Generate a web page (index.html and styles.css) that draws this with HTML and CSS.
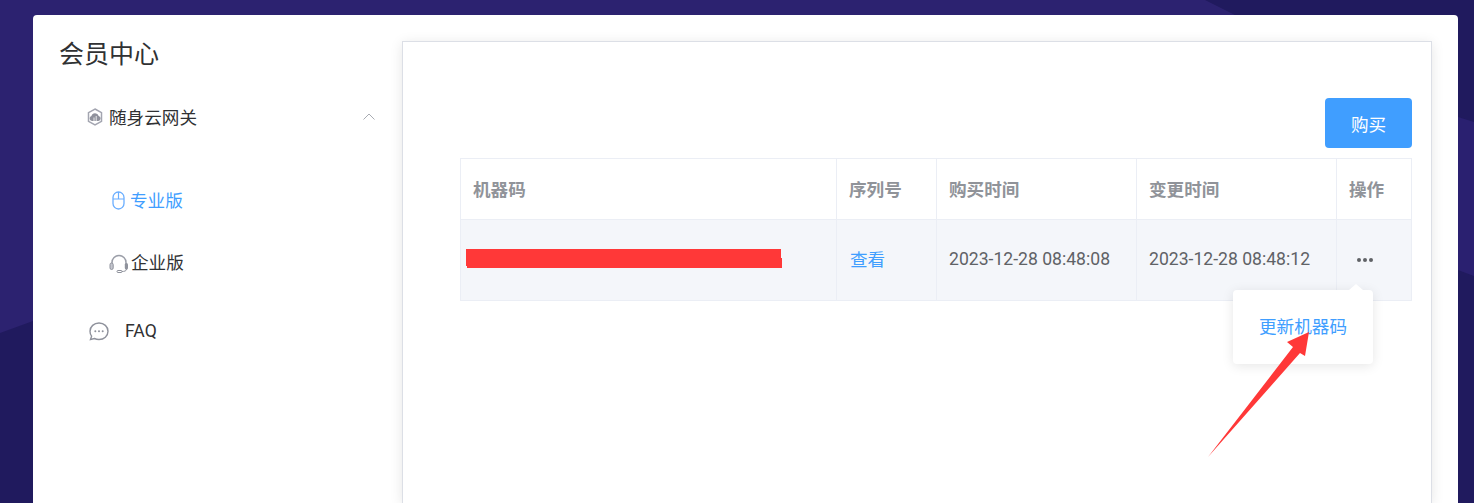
FILE: index.html
```html
<!DOCTYPE html>
<html lang="zh-CN">
<head>
  <meta charset="UTF-8" />
  <title>会员中心</title>
  <link rel="stylesheet" href="styles.css">
</head>
<body>

  <!-- Background shapes -->
  <div class="bg-light"></div>
  <div class="bg-band"></div>

  <div class="card">

    <!-- Left menu -->
    <div class="sidebar">
      <h2 class="sidebar-title">会员中心</h2>
      <div class="menu">
        <div class="menu-head">
          <svg class="icon icon-cloud" viewBox="0 0 16 18"><path d="M8 1l6.500 3.700v8.600L8 17l-6.500-3.700V4.700z" fill="none" stroke="#a3a5b0" stroke-width="1.500"/><path d="M5 13a2.500 2.500 0 0 1-.6-4.900 3.800 3.800 0 0 1 7.300-.2A2.600 2.600 0 0 1 11.300 13z" fill="#8f919c"/><path d="M7 13V9.500M9.200 13V8" stroke="#fff" stroke-width=".8"/></svg>
          <span>随身云网关</span>
          <svg class="chevron" viewBox="0 0 12 7"><path d="M.5 6.500L6 1l5.500 5.500" fill="none" stroke="#a8abb2" stroke-width="1"/></svg>
        </div>
        <div class="submenu">
          <div class="sub-item active">
            <svg class="icon icon-mouse" viewBox="0 0 13 19"><rect x="1" y="1" width="11" height="17" rx="5.500" fill="none" stroke="#6aaeff" stroke-width="1.300"/><path d="M1 8h11M6.500 1v7" stroke="#6aaeff" stroke-width="1.200"/></svg>
            <span>专业版</span>
          </div>
          <div class="sub-item">
            <svg class="icon icon-headset" viewBox="0 0 20 19"><path d="M3 10V8.500a7 7 0 0 1 14 0V10" fill="none" stroke="#9b9ea8" stroke-width="1.500"/><rect x="1" y="9" width="3.200" height="6.500" rx="1.600" fill="#c4c6ce" stroke="#8f929c" stroke-width="1"/><rect x="15.800" y="9" width="3.200" height="6.500" rx="1.600" fill="#8f929c"/><path d="M17.500 15c0 2-2 2.500-5 2.500" fill="none" stroke="#8f929c" stroke-width="1"/><rect x="8" y="16.500" width="5" height="2" rx="1" fill="#fff" stroke="#8f929c" stroke-width="1"/></svg>
            <span>企业版</span>
          </div>
        </div>
        <div class="menu-head faq">
          <svg class="icon icon-chat" viewBox="0 0 20 19"><path d="M10 1c5 0 9 3.600 9 8.300s-4 8.200-9 8.200c-1.700 0-3.300-.4-4.600-1l-3.900 1 1.100-3.300A8 8 0 0 1 1 9.300C1 4.600 5 1 10 1z" fill="none" stroke="#8f929c" stroke-width="1.400"/><circle cx="6.300" cy="9.300" r="1" fill="#8f929c"/><circle cx="10" cy="9.300" r="1" fill="#8f929c"/><circle cx="13.700" cy="9.300" r="1" fill="#8f929c"/></svg>
          <span>FAQ</span>
        </div>
      </div>
    </div>

    <!-- Main panel -->
    <div class="panel">
      <div class="toolbar">
        <button class="buy-button">购买</button>
      </div>
      <table class="order-table">
        <thead>
          <tr>
            <th class="col-code">机器码</th>
            <th class="col-serial">序列号</th>
            <th class="col-time">购买时间</th>
            <th class="col-time">变更时间</th>
            <th class="col-action">操作</th>
          </tr>
        </thead>
        <tbody>
          <tr>
            <td></td>
            <td><a class="link view-link">查看</a></td>
            <td>2023-12-28 08:48:08</td>
            <td>2023-12-28 08:48:12</td>
            <td class="more-cell">
              <span class="dots"><i></i><i></i><i></i></span>
              <div class="popover"><a class="link">更新机器码</a></div>
            </td>
          </tr>
        </tbody>
      </table>
    </div>
  </div>

  <!-- Red marks drawn over the screenshot -->
  <svg class="markup" viewBox="0 0 1474 503">
    <path d="M466 249h315v9h1v10H467v-2h-1z" fill="#ff3838"/>
    <path d="M1309 332l-22 10 6 5-85 110 92-104 5 3z" fill="#ff3838"/>
  </svg>

</body>
</html>
```

FILE: styles.css
```css
/* Page */
body {
  margin: 0;
  height: 503px;
  box-sizing: border-box;
  padding: 15px 16px 0 33px;
  overflow: hidden;
  position: relative;
  background-color: #201a5e;
  font-family: Roboto, "Noto Sans CJK SC", sans-serif;
  font-size: 17.6px;
  color: #303133;
}

/* Background shapes */
.bg-light {
  position: absolute;
  inset: 0;
  background: #2c2270;
  clip-path: polygon(0 0, 1205px 0, 1235px 15px, 33px 321px, 0 333px);
}

.bg-band {
  position: absolute;
  inset: 0;
  background: #2a2070;
  clip-path: polygon(1458px 117px, 1474px 122px, 1474px 276px, 1458px 270px);
}

/* Card */
.card {
  position: relative;
  display: flex;
  height: 100%;
  background: #fff;
  border-radius: 4px 4px 0 0;
  overflow: hidden;
}

/* Sidebar */
.sidebar {
  width: 369px;
  flex: none;
}

.sidebar-title {
  margin: 0;
  padding: 22px 0 0 26px;
  font-size: 25px;
  font-weight: 400;
  line-height: 36px;
}

.menu {
  margin-top: 15px;
}

.menu-head {
  display: flex;
  align-items: center;
  height: 56px;
  padding-left: 54px;
  position: relative;
}

.icon {
  flex: none;
}

.icon-cloud {
  width: 16px;
  height: 18px;
  margin: 2px 6px 0 0;
}

.chevron {
  position: absolute;
  left: 330px;
  top: 25px;
  width: 12px;
  height: 7px;
}

.submenu {
  padding: 24px 0 11px;
}

.sub-item {
  display: flex;
  align-items: center;
  height: 62px;
  padding-left: 76px;
}

.sub-item.active {
  color: #409eff;
}

.icon-mouse {
  width: 13px;
  height: 19px;
  margin: 2px 5px 0 3px;
}

.icon-headset {
  width: 20px;
  height: 19px;
  margin: 4px 2px 0 0;
}

.faq {
  padding-left: 56px;
}

.icon-chat {
  width: 20px;
  height: 19px;
  margin-right: 16px;
}

/* Main panel */
.panel {
  flex: 1;
  min-width: 0;
  margin: 26px 26px 0 0;
  padding: 56px 19px 0 57px;
  border: 1px solid #dcdfe6;
  border-bottom: none;
  box-shadow: 0 2px 12px rgba(0, 0, 0, 0.1);
}

.toolbar {
  display: flex;
  justify-content: flex-end;
  margin-bottom: 10px;
}

.buy-button {
  width: 87px;
  height: 50px;
  border: none;
  border-radius: 4px;
  background: #409eff;
  color: #fff;
  font-family: inherit;
  font-size: 17.6px;
}

/* Table */
.order-table {
  width: 951px;
  table-layout: fixed;
  border-collapse: collapse;
  color: #606266;
}

.order-table th,
.order-table td {
  box-sizing: border-box;
  border: 1px solid #ebeef5;
  padding: 0 12px;
  text-align: left;
}

.order-table th {
  height: 61px;
  padding-bottom: 1px;
  color: #909399;
  font-size: 17.6px;
  font-weight: 700;
}

.order-table td {
  height: 81px;
  padding-bottom: 2px;
  background: #f4f6fa;
}

.col-code { width: 376px; }
.col-serial { width: 100px; }
.col-time { width: 200px; }
.col-action { width: 75px; }

.link {
  color: #409eff;
}

.view-link {
  display: block;
  margin: 0 0 2px 1px;
}

.order-table .more-cell {
  position: relative;
  padding-bottom: 0;
}

.dots {
  display: flex;
  gap: 2px;
  margin-left: 8px;
}

.dots i {
  width: 4px;
  height: 4px;
  border-radius: 50%;
  background: #606266;
}

/* Popover under the dots */
.popover {
  position: absolute;
  left: -104px;
  top: 70px;
  z-index: 2;
  box-sizing: border-box;
  width: 140px;
  height: 74px;
  padding-bottom: 4px;
  display: flex;
  align-items: center;
  justify-content: center;
  background: #fff;
  border-radius: 4px;
  box-shadow: 0 2px 12px rgba(0, 0, 0, 0.1);
}

.popover::before {
  content: "";
  position: absolute;
  left: 116px;
  top: -6px;
  border: 7px solid transparent;
  border-top: none;
  border-bottom: 6px solid #fff;
}

/* Red marks */
.markup {
  position: absolute;
  left: 0;
  top: 0;
  width: 1474px;
  height: 503px;
  z-index: 5;
  pointer-events: none;
}
```
